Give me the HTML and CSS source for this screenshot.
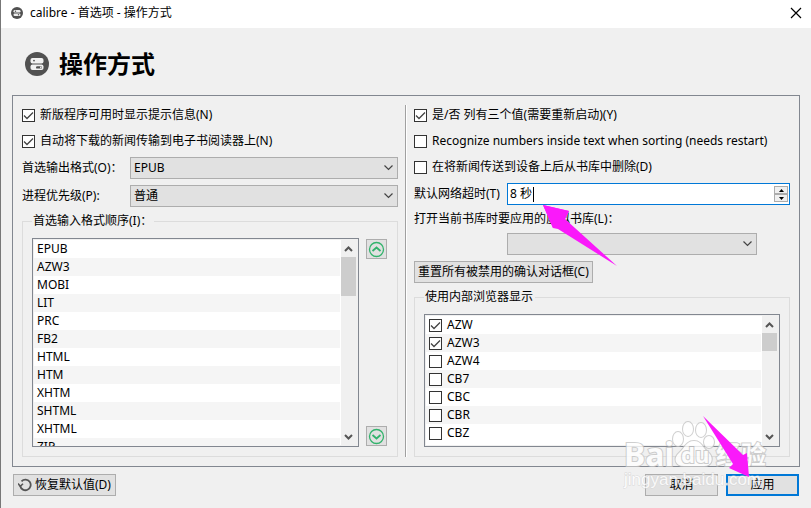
FILE: index.html
```html
<!DOCTYPE html>
<html lang="zh-CN">
<head>
  <title>calibre - 首选项 - 操作方式</title>
  <meta charset="utf-8">
  <meta name="viewport" content="width=device-width, initial-scale=1.0">
  <link rel="stylesheet" href="styles.css">
</head>
<body>
  <div class="window">
    <header class="titlebar">
      <svg class="app-icon" viewBox="0 0 24 24">
        <circle cx="12" cy="12" r="12" fill="#515151"/>
        <rect x="5" y="6" width="14" height="5" rx="2.5" fill="#eee"/>
        <rect x="5" y="13" width="14" height="5" rx="2.5" fill="#eee"/>
        <circle cx="9" cy="8.5" r="1.4" fill="#515151"/>
        <circle cx="15" cy="15.5" r="1.4" fill="#515151"/>
      </svg>
      <span class="titlebar-text">calibre - 首选项 - 操作方式</span>
      <button class="close" aria-label="关闭">
        <svg width="12" height="12" viewBox="0 0 12 12"><path d="M1 1L11 11M11 1L1 11" stroke="#000" stroke-width="1.2"/></svg>
      </button>
    </header>

    <div class="heading">
      <svg class="heading-icon" viewBox="0 0 24 24">
        <circle cx="12" cy="12" r="12" fill="#515151"/>
        <rect x="5.5" y="6" width="13" height="5.4" rx="2" fill="#f2f2f2"/>
        <rect x="5.5" y="12.6" width="13" height="5.4" rx="2" fill="#f2f2f2"/>
        <circle cx="9" cy="8.6" r="0.9" fill="#515151"/>
        <rect x="11" y="14.2" width="6" height="2.4" rx="1.2" fill="#515151"/>
        <circle cx="15.8" cy="15.4" r="0.8" fill="#f2f2f2"/>
      </svg>
      <h1>操作方式</h1>
    </div>

    <main class="panel">
      <section class="column">
        <label class="check"><input type="checkbox" checked>新版程序可用时显示提示信息(N)</label>
        <label class="check"><input type="checkbox" checked>自动将下载的新闻传输到电子书阅读器上(N)</label>
        <div class="field">
          <label class="field-label" for="output">首选输出格式(O)：</label>
          <select id="output"><option>EPUB</option></select>
        </div>
        <div class="field">
          <label class="field-label" for="priority">进程优先级(P):</label>
          <select id="priority"><option>普通</option></select>
        </div>
        <fieldset>
          <legend>首选输入格式顺序(I)：</legend>
          <div class="group">
            <div class="list">
              <ul>
                <li>EPUB</li>
                <li>AZW3</li>
                <li>MOBI</li>
                <li>LIT</li>
                <li>PRC</li>
                <li>FB2</li>
                <li>HTML</li>
                <li>HTM</li>
                <li>XHTM</li>
                <li>SHTML</li>
                <li>XHTML</li>
                <li>ZIP</li>
              </ul>
              <div class="scrollbar">
                <button class="scroll-btn" aria-label="向上滚动"><svg width="9" height="8" viewBox="0 0 9 8"><path d="M1 6L4.5 2.5L8 6" fill="none" stroke="#555" stroke-width="2"/></svg></button>
                <div class="thumb thumb-long"></div>
                <button class="scroll-btn scroll-down" aria-label="向下滚动"><svg width="9" height="8" viewBox="0 0 9 8"><path d="M1 2L4.5 5.5L8 2" fill="none" stroke="#555" stroke-width="2"/></svg></button>
              </div>
            </div>
            <div class="order">
              <button aria-label="上移"><svg width="17" height="17" viewBox="0 0 17 17" fill="none" stroke="#32b36c"><circle cx="8.5" cy="8.5" r="7" stroke-width="1.3"/><path d="M4.5 10L8.5 6.5L12.5 10" stroke-width="1.8"/></svg></button>
              <button aria-label="下移"><svg width="17" height="17" viewBox="0 0 17 17" fill="none" stroke="#32b36c"><circle cx="8.5" cy="8.5" r="7" stroke-width="1.3"/><path d="M4.5 7L8.5 10.5L12.5 7" stroke-width="1.8"/></svg></button>
            </div>
          </div>
        </fieldset>
      </section>

      <div class="divider"></div>

      <section class="column">
        <label class="check"><input type="checkbox" checked>是/否 列有三个值(需要重新启动)(Y)</label>
        <label class="check"><input type="checkbox">Recognize numbers inside text when sorting (needs restart)</label>
        <label class="check"><input type="checkbox">在将新闻传送到设备上后从书库中删除(D)</label>
        <div class="field">
          <label class="timeout-label" for="timeout">默认网络超时(T)</label>
          <div class="spin">
            <input type="text" id="timeout" value="8 秒">
            <span class="caret"></span>
            <div class="spin-buttons">
              <button aria-label="增加"><svg width="5" height="3" viewBox="0 0 5 3"><path d="M0 3L2.5 0L5 3Z"/></svg></button>
              <button aria-label="减少"><svg width="5" height="3" viewBox="0 0 5 3"><path d="M0 0L2.5 3L5 0Z"/></svg></button>
            </div>
          </div>
        </div>
        <label class="library-label" for="library">打开当前书库时要应用的虚拟书库(L)：</label>
        <div class="library">
          <select id="library"></select>
        </div>
        <button class="btn reset">重置所有被禁用的确认对话框(C)</button>
        <fieldset>
          <legend>使用内部浏览器显示</legend>
          <div class="group">
            <div class="list">
              <ul>
                <li><label class="check"><input type="checkbox" checked>AZW</label></li>
                <li><label class="check"><input type="checkbox" checked>AZW3</label></li>
                <li><label class="check"><input type="checkbox">AZW4</label></li>
                <li><label class="check"><input type="checkbox">CB7</label></li>
                <li><label class="check"><input type="checkbox">CBC</label></li>
                <li><label class="check"><input type="checkbox">CBR</label></li>
                <li><label class="check"><input type="checkbox">CBZ</label></li>
              </ul>
              <div class="scrollbar">
                <button class="scroll-btn" aria-label="向上滚动"><svg width="9" height="8" viewBox="0 0 9 8"><path d="M1 6L4.5 2.5L8 6" fill="none" stroke="#555" stroke-width="2"/></svg></button>
                <div class="thumb"></div>
                <button class="scroll-btn scroll-down" aria-label="向下滚动"><svg width="9" height="8" viewBox="0 0 9 8"><path d="M1 2L4.5 5.5L8 2" fill="none" stroke="#555" stroke-width="2"/></svg></button>
              </div>
            </div>
          </div>
        </fieldset>
      </section>
    </main>

    <footer class="footer">
      <button class="btn restore">
        <svg width="14" height="14" viewBox="0 0 14 14" fill="none" stroke="#555" stroke-width="1.8"><path d="M2.2 8A5.3 5.3 0 1 0 3.5 3.3"/><path d="M0 5.5L2.3 8.3L5 5.8" stroke-width="1.5"/></svg>
        恢复默认值(D)
      </button>
      <button class="btn action">取消</button>
      <button class="btn action apply">应用</button>
    </footer>

    <!-- 水印 -->
    <svg class="watermark" width="150" height="76" viewBox="0 0 150 76">
      <text class="wm-logo" x="1" y="46">Bai</text>
      <g class="wm-shape">
        <ellipse cx="55" cy="19" rx="5" ry="7"/>
        <ellipse cx="65" cy="9" rx="5" ry="7"/>
        <ellipse cx="78" cy="10" rx="5" ry="7"/>
        <ellipse cx="86" cy="22" rx="5" ry="6"/>
        <path d="M71 21C63 21 61 29 56 33C50 38 52 46 61 46H81C89 46 91 38 86 33C80 29 79 21 71 21Z"/>
      </g>
      <text class="wm-du" x="58" y="43">du</text>
      <text class="wm-cjk" x="93" y="44">经验</text>
      <text class="wm-url" x="1" y="65">jingyan.baidu.com</text>
    </svg>

    <!-- 箭头 -->
    <svg class="arrow arrow-timeout" width="76" height="62" viewBox="0 0 76 62"><path d="M1 1L27 7L23 15L75 62L16 25L11 24L11 24L11 24Z"/><path d="M1 1L27 7L23 15L11 24Z"/></svg>
    <svg class="arrow arrow-apply" width="48" height="62" viewBox="0 0 48 62"><path d="M1 0L41 39L45 37L47 61L27 52L31 48Z"/></svg>
  </div>
</body>
</html>
```
FILE: styles.css
```css
* {
  box-sizing: border-box;
}
body {
  margin: 0;
  font-family: "Noto Sans", "Noto Sans CJK SC", sans-serif;
  font-size: 12px;
  line-height: 18px;
  color: #000;
}
button, input, select {
  font: inherit;
  color: inherit;
  margin: 0;
}
.window {
  position: relative;
  display: flex;
  flex-direction: column;
  height: 100vh;
  overflow: hidden;
  background: #f0f0f0;
  border-left: 1px solid #777;
}

/* title bar */
.titlebar {
  display: flex;
  align-items: center;
  gap: 7px;
  height: 28px;
  flex: none;
  padding: 0 9px 3px 10px;
  background: #fff;
}
.app-icon {
  width: 12px;
  height: 12px;
}
.titlebar-text {
  flex: 1;
}
.close {
  display: flex;
  padding: 0;
  border: none;
  background: none;
}
.heading {
  display: flex;
  align-items: center;
  gap: 10px;
  flex: none;
  height: 67px;
  padding: 5px 24px 0;
}
.heading-icon {
  width: 24px;
  height: 24px;
}
h1 {
  margin: 0;
  font-size: 24px;
  line-height: 32px;
}

/* settings panel */
.panel {
  display: flex;
  flex: 1;
  min-height: 0;
  margin: 0 11px;
  padding: 9px;
  border: 1px solid #828790;
}
.column {
  display: flex;
  flex-direction: column;
  gap: 6px;
  flex: 1;
  min-width: 0;
}
.divider {
  width: 2px;
  margin: 0 7px;
  border-left: 1px solid #a0a0a0;
  border-right: 1px solid #fff;
}
.check {
  display: flex;
  align-items: center;
  gap: 5px;
  height: 20px;
  white-space: nowrap;
}
.check input {
  appearance: none;
  width: 13px;
  height: 13px;
  flex: none;
  border: 1px solid #333;
  background: #fff;
}
.check input:checked {
  background: #fff url("data:image/svg+xml,%3Csvg xmlns='http://www.w3.org/2000/svg' viewBox='0 0 11 11'%3E%3Cpath d='M1 5.5L4 8.5L10 2.5' fill='none' stroke='%23444' stroke-width='1.3'/%3E%3C/svg%3E");
}
.field {
  display: flex;
  align-items: center;
  height: 22px;
  white-space: nowrap;
}
.field-label {
  width: 108px;
}
.timeout-label {
  width: 93px;
}
select {
  appearance: none;
  flex: 1;
  min-width: 0;
  height: 22px;
  padding: 0 20px 0 3px;
  border: 1px solid #adadad;
  border-radius: 0;
  background: #e1e1e1 url("data:image/svg+xml,%3Csvg xmlns='http://www.w3.org/2000/svg' width='9' height='6'%3E%3Cpath d='M.5 .5L4.5 4.5L8.5 .5' fill='none' stroke='%23444' stroke-width='1.2'/%3E%3C/svg%3E") no-repeat right 4px center;
}
.spin {
  display: flex;
  align-items: center;
  flex: 1;
  height: 22px;
  padding: 1px;
  border: 1px solid #0078d7;
  background: #fff;
}
.spin input {
  width: 24px;
  padding: 0 0 0 1px;
  border: none;
  outline: none;
  background: none;
}
.caret {
  width: 1px;
  height: 15px;
  background: #000;
}
.spin-buttons {
  display: flex;
  flex-direction: column;
  width: 14px;
  height: 16px;
  margin-left: auto;
}
.spin-buttons button {
  display: flex;
  align-items: center;
  justify-content: center;
  flex: 1;
  padding: 0;
  border: 1px solid #acacac;
  background: #f0f0f0;
}
.library-label {
  height: 16px;
  line-height: 16px;
}
.library {
  display: flex;
  padding: 0 33px 0 93px;
}

/* group boxes */
fieldset {
  flex: 1;
  min-width: 0;
  min-height: 0;
  margin: 0;
  padding: 9px;
  border: 1px solid #dcdcdc;
}
legend {
  height: 16px;
  line-height: 16px;
  padding: 0 2px 0 1px;
}
.group {
  display: flex;
  gap: 7px;
  height: 100%;
}
.list {
  display: flex;
  flex: 1;
  min-width: 0;
  padding: 1px;
  border: 1px solid #828790;
  background: #f0f0f0;
  overflow: hidden;
}
.list ul {
  flex: 1;
  margin: 0;
  padding: 0;
  list-style: none;
  background: #fff;
}
.list li {
  height: 18px;
  padding: 0 3px;
}
.list li:nth-child(even) {
  background: #f5f5f5;
}
.list .check {
  height: 18px;
}
.scrollbar {
  display: flex;
  flex-direction: column;
  width: 17px;
  padding-right: 1px;
  border-left: 1px solid #fff;
}
.scroll-btn {
  display: flex;
  align-items: center;
  justify-content: center;
  height: 17px;
  padding: 0;
  border: none;
  background: none;
}
.scroll-down {
  margin-top: auto;
}
.thumb {
  height: 18px;
  background: #cdcdcd;
}
.thumb-long {
  height: 39px;
}
.order {
  display: flex;
  flex-direction: column;
  justify-content: space-between;
  padding: 1px 0;
  margin-right: 1px;
}
.order button {
  display: flex;
  align-items: center;
  justify-content: center;
  width: 21px;
  height: 20px;
  padding: 0;
  border: 1px solid #adadad;
  background: #e1e1e1;
}

/* buttons */
.btn {
  display: flex;
  align-items: center;
  justify-content: center;
  gap: 3px;
  height: 22px;
  padding: 0 3px;
  border: 1px solid #adadad;
  background: #e1e1e1;
  white-space: nowrap;
}
.reset {
  align-self: flex-start;
}
.footer {
  display: flex;
  gap: 8px;
  flex: none;
  padding: 7px 12px 12px;
}
.restore {
  margin-right: auto;
  padding: 0 4px;
}
.action {
  width: 73px;
}
.apply {
  border: 2px solid #0078d7;
}

/* overlays */
.watermark {
  position: absolute;
  left: 622px;
  top: 420px;
  pointer-events: none;
  opacity: 0.8;
}
.watermark text, .wm-shape {
  fill: #fff;
  stroke: #c4c4c4;
  stroke-width: 2px;
  paint-order: stroke;
}
.wm-logo {
  font: bold 32px "Noto Sans", sans-serif;
}
.wm-du {
  font: bold 22px "Noto Sans", sans-serif;
}
.wm-cjk {
  font: bold 25px "Noto Sans CJK SC", sans-serif;
}
.watermark .wm-url {
  font: 17px "Liberation Sans", sans-serif;
  stroke: #d4d4d4;
  stroke-width: 1px;
}
.arrow {
  position: absolute;
  fill: #fa19fa;
  pointer-events: none;
}
.arrow-timeout {
  left: 541px;
  top: 204px;
}
.arrow-apply {
  left: 701px;
  top: 416px;
}
```
